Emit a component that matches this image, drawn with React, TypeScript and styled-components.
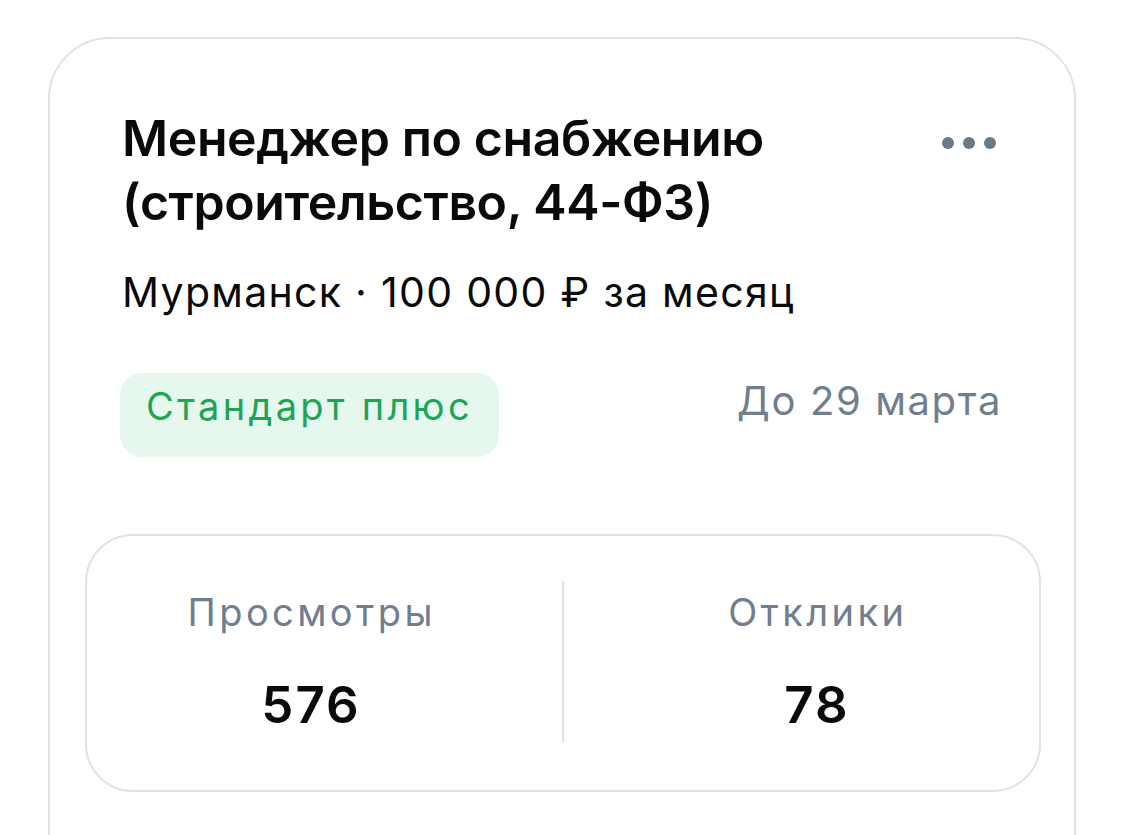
import React from "react";
import styled, { createGlobalStyle } from "styled-components";

const Global = createGlobalStyle`
  html, body { margin: 0; padding: 0; background: #ffffff; }
  body { font-family: Inter, "Noto Sans", sans-serif; -webkit-font-smoothing: antialiased; }
`;

const Page = styled.div`
  width: 1125px;
  height: 835px;
  overflow: hidden;
  padding: 37px 0 0 48px;
  box-sizing: border-box;
`;

const Card = styled.div`
  width: 1028px;
  height: 900px;
  box-sizing: border-box;
  border: 2px solid #dde3e8;
  border-radius: 62px;
  padding: 67px 36px 0 72px;
  display: flex;
  flex-direction: column;
`;

const Header = styled.div`
  display: flex;
  justify-content: space-between;
  align-items: flex-start;
`;

const Title = styled.h1`
  margin: 0;
  font-size: 50px;
  line-height: 64px;
  font-weight: 600;
  color: #0a0a0a;
  letter-spacing: -0.4px;
`;

const MoreButton = styled.div`
  display: flex;
  gap: 9px;
  padding: 31px 42px 0 0;
`;

const Dot = styled.span`
  width: 12px;
  height: 12px;
  border-radius: 50%;
  background: #6b7a8b;
`;

const Subtitle = styled.div`
  margin-top: 33px;
  font-size: 41px;
  line-height: 50px;
  letter-spacing: 1.3px;
  color: #0a0a0a;
`;

const MetaRow = styled.div`
  margin-top: 56px;
  display: flex;
  justify-content: space-between;
  align-items: flex-start;
  padding-right: 36px;
`;

const Badge = styled.div`
  margin-left: -2px;
  height: 84px;
  box-sizing: border-box;
  padding: 0 26px 18px 26px;
  line-height: 66px;
  background: #e6f7ed;
  color: #1fa457;
  border-radius: 22px;
  font-size: 38px;
  letter-spacing: 3.3px;
  white-space: nowrap;
`;

const Deadline = styled.div`
  margin-top: 5px;
  font-size: 40px;
  line-height: 46px;
  letter-spacing: 1.6px;
  color: #707e8e;
`;

const Stats = styled.div`
  margin: 77px 0 0 -37px;
  width: 956px;
  height: 258px;
  box-sizing: border-box;
  border: 2px solid #dde3e8;
  border-radius: 48px;
  padding-bottom: 2px;
  display: grid;
  grid-template-columns: 1fr 2px 1fr;
  column-gap: 29px;
  align-items: center;
`;

const Stat = styled.div`
  display: flex;
  flex-direction: column;
  align-items: center;
  gap: 41px;
`;

const StatLabel = styled.div`
  font-size: 38px;
  line-height: 44px;
  letter-spacing: 3.4px;
  margin-right: -3.4px;
  color: #707e8e;
`;

const StatValue = styled.div`
  font-size: 51px;
  line-height: 60px;
  font-weight: 600;
  letter-spacing: 2px;
  margin-right: -2px;
  color: #0a0a0a;
`;

const Divider = styled.div`
  width: 2px;
  height: 162px;
  background: #dde3e8;
`;

export default function App() {
  return (
    <>
      <Global />
      <Page>
        <Card>
          <Header>
            <Title>
              Менеджер по снабжению
              <br />
              (строительство, 44-ФЗ)
            </Title>
            <MoreButton>
              <Dot />
              <Dot />
              <Dot />
            </MoreButton>
          </Header>
          <Subtitle>Мурманск · 100 000 ₽ за месяц</Subtitle>
          <MetaRow>
            <Badge>Стандарт плюс</Badge>
            <Deadline>До 29 марта</Deadline>
          </MetaRow>
          <Stats>
            <Stat>
              <StatLabel>Просмотры</StatLabel>
              <StatValue>576</StatValue>
            </Stat>
            <Divider />
            <Stat>
              <StatLabel>Отклики</StatLabel>
              <StatValue>78</StatValue>
            </Stat>
          </Stats>
        </Card>
      </Page>
    </>
  );
}
